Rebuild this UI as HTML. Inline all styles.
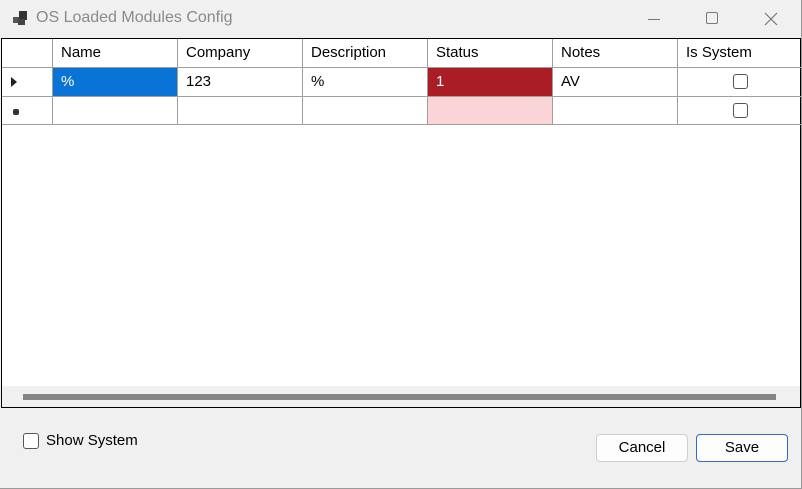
<!DOCTYPE html>
<html><head><meta charset="utf-8"><style>
*{margin:0;padding:0;box-sizing:border-box}
body{width:802px;height:489px;background:#f0f0f0;font-family:"Liberation Sans",sans-serif;font-size:15px;color:#000;position:relative;overflow:hidden}
.a{position:absolute}
.title{left:36px;top:9px;font-size:16px;color:#8a8a8a}
.grid{left:1px;top:38px;width:800px;height:370px;border:1px solid #000;background:#fff}
.c{position:absolute;border-right:1px solid #a0a0a0;border-bottom:1px solid #a0a0a0;padding-left:8px;line-height:28px;white-space:nowrap}
.cb{position:absolute;width:15px;height:15px;border:1px solid #555;border-radius:3px;background:#fff}
.btn{position:absolute;top:434px;width:92px;height:28px;border:1px solid #cfcfcf;border-radius:4px;background:#fdfdfd;text-align:center;line-height:26px}
</style></head><body>
<div class="a" style="left:13px;top:17px;width:6px;height:6px;background:#555"></div>
<div class="a" style="left:19px;top:11px;width:8px;height:9px;background:#333"></div>
<div class="a" style="left:18px;top:19px;width:7px;height:6px;background:#444"></div>
<div class="a title">OS Loaded Modules Config</div>
<div class="a" style="left:648px;top:19px;width:12px;height:1px;background:#777"></div>
<div class="a" style="left:706px;top:12px;width:12px;height:12px;border:1px solid #777;border-radius:2px"></div>
<svg class="a" style="left:764px;top:12px" width="14" height="14"><path d="M1 1L13 13M13 1L1 13" stroke="#777" stroke-width="1.2"/></svg>

<div class="a grid">
 <div class="c" style="left:0;top:0;width:51px;height:29px"></div>
 <div class="c" style="left:51px;top:0;width:125px;height:29px">Name</div>
 <div class="c" style="left:176px;top:0;width:125px;height:29px">Company</div>
 <div class="c" style="left:301px;top:0;width:125px;height:29px">Description</div>
 <div class="c" style="left:426px;top:0;width:125px;height:29px">Status</div>
 <div class="c" style="left:551px;top:0;width:125px;height:29px">Notes</div>
 <div class="c" style="left:676px;top:0;width:123px;height:29px;border-right:none">Is System</div>
 <div class="c" style="left:0;top:29px;width:51px;height:29px"></div>
 <div class="a" style="left:9px;top:38px;width:0;height:0;border-left:6px solid #222;border-top:5px solid transparent;border-bottom:5px solid transparent"></div>
 <div class="c" style="left:51px;top:29px;width:125px;height:29px;background:#0a74d6;color:#fff">%</div>
 <div class="c" style="left:176px;top:29px;width:125px;height:29px">123</div>
 <div class="c" style="left:301px;top:29px;width:125px;height:29px">%</div>
 <div class="c" style="left:426px;top:29px;width:125px;height:29px;background:#ab1d25;color:#fff">1</div>
 <div class="c" style="left:551px;top:29px;width:125px;height:29px">AV</div>
 <div class="c" style="left:676px;top:29px;width:123px;height:29px;border-right:none"></div>
 <div class="cb" style="left:731px;top:35px"></div>
 <div class="c" style="left:0;top:58px;width:51px;height:28px"></div>
 <div class="a" style="left:11px;top:70px;width:6px;height:6px;border-radius:2px;background:#333"></div>
 <div class="c" style="left:51px;top:58px;width:125px;height:28px"></div>
 <div class="c" style="left:176px;top:58px;width:125px;height:28px"></div>
 <div class="c" style="left:301px;top:58px;width:125px;height:28px"></div>
 <div class="c" style="left:426px;top:58px;width:125px;height:28px;background:#fad4d6"></div>
 <div class="c" style="left:551px;top:58px;width:125px;height:28px"></div>
 <div class="c" style="left:676px;top:58px;width:123px;height:28px;border-right:none"></div>
 <div class="cb" style="left:731px;top:64px"></div>
 <div class="a" style="left:0;top:347px;width:798px;height:21px;background:#f0f0f0"></div>
 <div class="a" style="left:21px;top:355px;width:753px;height:6px;background:#858585"></div>
</div>

<div class="cb" style="left:23px;top:433px;width:16px;height:16px"></div>
<div class="a" style="left:46px;top:432px">Show System</div>
<div class="btn" style="left:596px">Cancel</div>
<div class="btn" style="left:696px;border-color:#2c6cc8">Save</div>
<div class="a" style="left:801px;top:0;width:1px;height:489px;background:#9a9a9a"></div>
<div class="a" style="left:0;top:488px;width:802px;height:1px;background:#9a9a9a"></div>
</body></html>
